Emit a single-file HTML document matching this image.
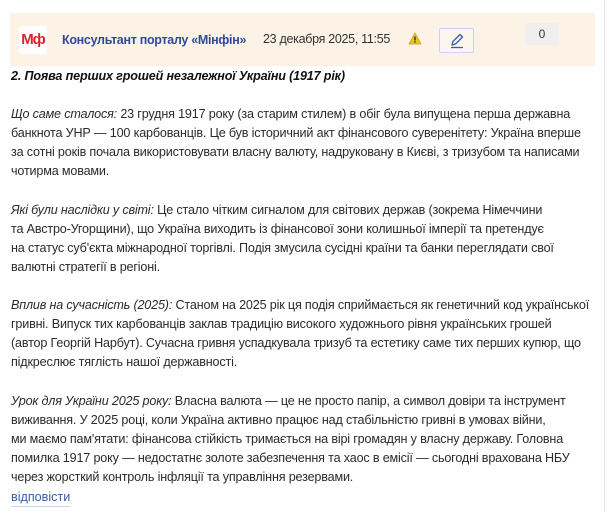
<!DOCTYPE html>
<html><head><meta charset="utf-8"><style>
body{margin:0;background:#fff;width:610px;height:512px;overflow:hidden;font-family:"Liberation Sans",sans-serif;color:#2b2b2b}
.hdr{position:absolute;left:10px;top:13px;width:585px;height:53px;background:#fcf3e6}
.logo{position:absolute;left:9px;top:13px;width:28px;height:28px;background:#fff;border-radius:3px;color:#d8232a;font-weight:bold;font-size:15px;line-height:28px;text-align:center;letter-spacing:-1px}
.name{position:absolute;left:52px;top:20px;color:#2f4a9a;font-weight:bold;font-size:12.5px;letter-spacing:-0.3px}
.date{position:absolute;left:253px;top:19px;font-size:12.5px;color:#333;letter-spacing:-0.3px}
.warn{position:absolute;left:398px;top:19px}
.edit{position:absolute;left:429px;top:15px;width:33px;height:23px;border:1px solid #c9d3ea;border-radius:2px;background:#fcf6ee}
.cnt{position:absolute;left:515px;top:10px;width:34px;height:22px;background:#f0efee;border-radius:2px;font-size:12px;text-align:center;line-height:22px;color:#333}
.txt{position:absolute;left:11px;top:67px;font-size:12.6px;line-height:19.1px;white-space:nowrap;letter-spacing:-0.17px}
.txt i{font-style:italic}
.title{font-weight:bold;font-style:italic;color:#111}
.rl{position:absolute;left:11px;top:489px;font-size:12.6px;color:#3a5ba8;border-bottom:1px solid #c9d3ea;line-height:17px}
.rb{position:absolute;left:604px;top:0;width:1px;height:512px;background:#e6e6e6}
</style></head><body>
<div class="hdr">
<div class="logo">Мф</div>
<div class="name">Консультант порталу «Мінфін»</div>
<div class="date">23 декабря 2025, 11:55</div>
<svg class="warn" width="14" height="13" viewBox="0 0 14 13"><path d="M7 1L13 12H1Z" fill="#e6c233" stroke="#d8b020" stroke-linejoin="round"/><rect x="6.3" y="4.5" width="1.4" height="4" fill="#333"/><rect x="6.3" y="9.3" width="1.4" height="1.4" fill="#333"/></svg>
<div class="edit"><svg width="33" height="23" viewBox="0 0 33 23"><path d="M12 16l1-3.5 7-7 2.5 2.5-7 7z" fill="none" stroke="#3a5ba8" stroke-width="1.3" stroke-linejoin="round"/><path d="M11 18.5h12" stroke="#3a5ba8" stroke-width="1.3"/></svg></div>
<div class="cnt">0</div>
</div>
<div class="txt">
<span class="title">2. Поява перших грошей незалежної України (1917 рік)</span><br><br>
<i>Що саме сталося:</i> 23 грудня 1917 року (за старим стилем) в обіг була випущена перша державна<br>
банкнота УНР — 100 карбованців. Це був історичний акт фінансового суверенітету: Україна вперше<br>
за сотні років почала використовувати власну валюту, надруковану в Києві, з тризубом та написами<br>
чотирма мовами.<br><br>
<i>Які були наслідки у світі:</i> Це стало чітким сигналом для світових держав (зокрема Німеччини<br>
та Австро-Угорщини), що Україна виходить із фінансової зони колишньої імперії та претендує<br>
на статус суб'єкта міжнародної торгівлі. Подія змусила сусідні країни та банки переглядати свої<br>
валютні стратегії в регіоні.<br><br>
<i>Вплив на сучасність (2025):</i> Станом на 2025 рік ця подія сприймається як генетичний код української<br>
гривні. Випуск тих карбованців заклав традицію високого художнього рівня українських грошей<br>
(автор Георгій Нарбут). Сучасна гривня успадкувала тризуб та естетику саме тих перших купюр, що<br>
підкреслює тяглість нашої державності.<br><br>
<i>Урок для України 2025 року:</i> Власна валюта — це не просто папір, а символ довіри та інструмент<br>
виживання. У 2025 році, коли Україна активно працює над стабільністю гривні в умовах війни,<br>
ми маємо пам'ятати: фінансова стійкість тримається на вірі громадян у власну державу. Головна<br>
помилка 1917 року — недостатнє золоте забезпечення та хаос в емісії — сьогодні врахована НБУ<br>
через жорсткий контроль інфляції та управління резервами.
</div>
<div class="rl">відповісти</div>
<div class="rb"></div>
</body></html>
